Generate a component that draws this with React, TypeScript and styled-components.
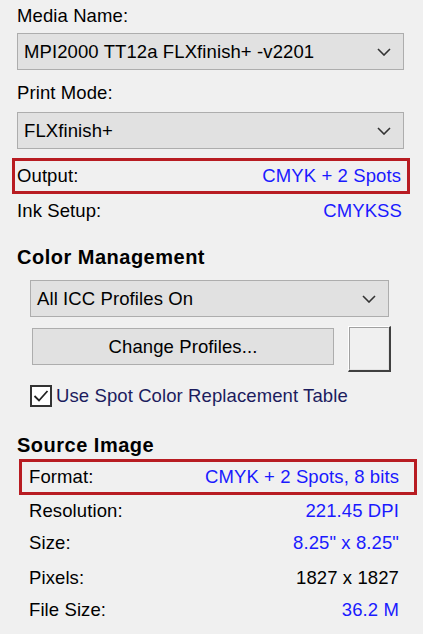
import React from "react";
import styled, { createGlobalStyle } from "styled-components";

const Global = createGlobalStyle`
  html, body { margin: 0; padding: 0; background: #f0f0f0; }
  body { font-family: Tahoma, "Liberation Sans", "DejaVu Sans", sans-serif; font-size: 18.5px; letter-spacing: 0.1px; color: #000; }
`;

const Panel = styled.div`
  width: 423px;
  height: 634px;
  box-sizing: border-box;
  padding: 5px 0 0 0;
  display: flex;
  flex-direction: column;
  background: #f0f0f0;
`;

const Label = styled.div<{ $mt?: number }>`
  margin: ${(p) => p.$mt ?? 0}px 0 0 17px;
  height: 22px;
  line-height: 22px;
`;

const Select = styled.div<{ $ml: number; $w: number; $mt: number }>`
  margin: ${(p) => p.$mt}px 0 0 ${(p) => p.$ml}px;
  width: ${(p) => p.$w}px;
  height: 37px;
  box-sizing: border-box;
  border: 1px solid #adadad;
  background: #e1e1e1;
  display: flex;
  align-items: center;
  justify-content: space-between;
  padding: 0 12px 0 6px;
`;

const Row = styled.div<{ $ml: number; $w: number; $mt: number; $boxed?: boolean; $pl?: number; $pr?: number }>`
  margin: ${(p) => p.$mt}px 0 0 ${(p) => p.$ml}px;
  width: ${(p) => p.$w}px;
  height: ${(p) => (p.$boxed ? 36 : 30)}px;
  box-sizing: border-box;
  border: 3px solid ${(p) => (p.$boxed ? "#b81c22" : "transparent")};
  display: flex;
  align-items: center;
  justify-content: space-between;
  padding: 0 ${(p) => p.$pr ?? 4}px 0 ${(p) => p.$pl ?? 2}px;
`;

const Value = styled.span`
  color: #1a1aff;
`;

const Plain = styled.span`
  color: #000;
`;

const Heading = styled.div<{ $mt: number }>`
  margin: ${(p) => p.$mt}px 0 0 17px;
  font-weight: bold;
  height: 24px;
  line-height: 24px;
  font-size: 20px;
  letter-spacing: 0.5px;
`;

const ButtonRow = styled.div`
  margin: 9px 0 0 32px;
  display: flex;
  align-items: flex-start;
  gap: 14px;
`;

const Button = styled.div`
  width: 302px;
  height: 37px;
  box-sizing: border-box;
  border: 1px solid #adadad;
  background: #e1e1e1;
  display: flex;
  align-items: center;
  justify-content: center;
  margin-top: 2px;
`;

const Swatch = styled.div`
  width: 43px;
  height: 46px;
  box-sizing: border-box;
  border-top: 1px solid #ffffff;
  border-left: 1px solid #ffffff;
  border-right: 2px solid #404040;
  border-bottom: 2px solid #404040;
  background: #f0f0f0;
  display: flex;
`;

const SwatchInner = styled.div`
  flex: 1;
  border-top: 1px solid #a0a0a0;
  border-left: 1px solid #a0a0a0;
  border-right: 1px solid #e3e3e3;
  border-bottom: 1px solid #e3e3e3;
`;

const CheckRow = styled.label`
  margin: 13px 0 0 30px;
  display: flex;
  align-items: center;
  gap: 4px;
  height: 22px;
`;

const Box = styled.span`
  width: 22px;
  height: 22px;
  box-sizing: border-box;
  border: 2px solid #333;
  background: #fff;
  display: flex;
  align-items: center;
  justify-content: center;
`;

const CheckText = styled.span`
  color: #1c1c5e;
`;

const Chevron = () => (
  <svg width="14" height="8" viewBox="0 0 14 8">
    <path d="M1 1 L7 7 L13 1" fill="none" stroke="#333" strokeWidth="1.6" />
  </svg>
);

export default function App() {
  return (
    <>
      <Global />
      <Panel>
        <Label>Media Name:</Label>
        <Select $ml={17} $w={387} $mt={6}>
          <span>MPI2000 TT12a FLXfinish+ -v2201</span>
          <Chevron />
        </Select>
        <Label $mt={12}>Print Mode:</Label>
        <Select $ml={17} $w={387} $mt={8}>
          <span>FLXfinish+</span>
          <Chevron />
        </Select>
        <Row $ml={12} $w={398} $mt={9} $boxed $pl={2} $pr={6}>
          <Plain>Output:</Plain>
          <Value>CMYK + 2 Spots</Value>
        </Row>
        <Row $ml={12} $w={398} $mt={2} $pl={2} $pr={5}>
          <Plain>Ink Setup:</Plain>
          <Value>CMYKSS</Value>
        </Row>
        <Heading $mt={19}>Color Management</Heading>
        <Select $ml={30} $w={359} $mt={11}>
          <span>All ICC Profiles On</span>
          <Chevron />
        </Select>
        <ButtonRow>
          <Button>Change Profiles...</Button>
          <Swatch>
            <SwatchInner />
          </Swatch>
        </ButtonRow>
        <CheckRow>
          <Box>
            <svg width="16" height="14" viewBox="0 0 16 14">
              <path d="M1.5 7 L6 11.5 L14.5 2" fill="none" stroke="#222" strokeWidth="1.8" />
            </svg>
          </Box>
          <CheckText>Use Spot Color Replacement Table</CheckText>
        </CheckRow>
        <Heading $mt={26}>Source Image</Heading>
        <Row $ml={19} $w={398} $mt={2} $boxed $pl={7} $pr={15}>
          <Plain>Format:</Plain>
          <Value>CMYK + 2 Spots, 8 bits</Value>
        </Row>
        <Row $ml={19} $w={398} $mt={1} $pl={7} $pr={15}>
          <Plain>Resolution:</Plain>
          <Value>221.45 DPI</Value>
        </Row>
        <Row $ml={19} $w={398} $mt={2} $pl={7} $pr={15}>
          <Plain>Size:</Plain>
          <Value>8.25" x 8.25"</Value>
        </Row>
        <Row $ml={19} $w={398} $mt={5} $pl={7} $pr={15}>
          <Plain>Pixels:</Plain>
          <Plain>1827 x 1827</Plain>
        </Row>
        <Row $ml={19} $w={398} $mt={2} $pl={7} $pr={15}>
          <Plain>File Size:</Plain>
          <Value>36.2 M</Value>
        </Row>
      </Panel>
    </>
  );
}
